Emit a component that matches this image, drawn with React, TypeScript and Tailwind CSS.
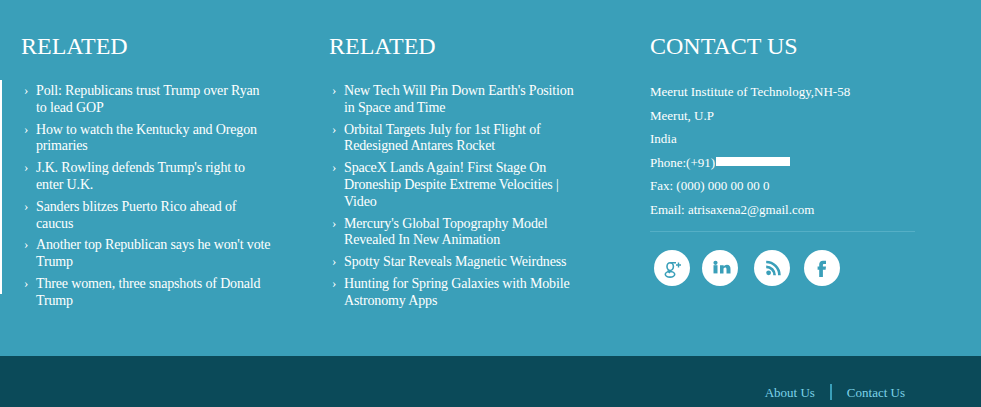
const col1 = [
  'Poll: Republicans trust Trump over Ryan to lead GOP',
  'How to watch the Kentucky and Oregon primaries',
  "J.K. Rowling defends Trump's right to enter U.K.",
  'Sanders blitzes Puerto Rico ahead of caucus',
  "Another top Republican says he won't vote Trump",
  'Three women, three snapshots of Donald Trump',
];

const col2 = [
  "New Tech Will Pin Down Earth's Position in Space and Time",
  'Orbital Targets July for 1st Flight of Redesigned Antares Rocket',
  'SpaceX Lands Again! First Stage On Droneship Despite Extreme Velocities | Video',
  "Mercury's Global Topography Model Revealed In New Animation",
  'Spotty Star Reveals Magnetic Weirdness',
  'Hunting for Spring Galaxies with Mobile Astronomy Apps',
];

function Links({ items }: { items: string[] }) {
  return (
    <ul className="flex flex-col gap-[5px]">
      {items.map((item) => (
        <li key={item} className="relative pl-[15px] text-[14px] leading-[16.8px] tracking-[-0.15px] text-white">
          <span className="absolute left-[3px] top-[-1px] text-[13px]">›</span>
          {item}
        </li>
      ))}
    </ul>
  );
}

function Social({ children }: { children: React.ReactNode }) {
  return (
    <a className="block h-9 w-9 rounded-full bg-white text-[#3a9fb9]">
      <svg viewBox="0 0 36 36" className="h-9 w-9">
        {children}
      </svg>
    </a>
  );
}

export default function App() {
  return (
    <div className="h-[407px] w-[981px] overflow-hidden bg-[#3a9fb9] font-['Liberation_Serif',serif]">
      <div className="flex h-[356px] pt-[33px]">
        {/* Related 1 */}
        <div className="w-[329px]">
          <h3 className="pl-[21px] text-[24px] leading-[26px] text-white">RELATED</h3>
          <div className="mt-[21px] h-[214px] w-[272px] border-l-2 border-white pl-[19px] pt-[3px]">
            <Links items={col1} />
          </div>
        </div>
        {/* Related 2 */}
        <div className="w-[321px]">
          <h3 className="text-[24px] leading-[26px] text-white">RELATED</h3>
          <div className="mt-[21px] w-[247px] pt-[3px]">
            <Links items={col2} />
          </div>
        </div>
        {/* Contact */}
        <div className="w-[265px]">
          <h3 className="text-[24px] leading-[26px] text-white">CONTACT US</h3>
          <div className="mt-[21px] text-[13px] leading-[23.6px] text-white">
            <p>Meerut Institute of Technology,NH-58</p>
            <p>Meerut, U.P</p>
            <p>India</p>
            <p className="flex items-center">
              Phone:(+91)
              <span className="ml-[1px] mt-[-2px] h-[9px] w-[74px] bg-white" />
            </p>
            <p>Fax: (000) 000 00 00 0</p>
            <p>Email: atrisaxena2@gmail.com</p>
          </div>
          <div className="mt-[9px] border-t border-[#55afc6]" />
          <div className="mt-[18px] flex pl-1">
            <Social>
              <g fill="none" stroke="currentColor" strokeWidth="1.6">
                <ellipse cx="16.2" cy="16.6" rx="3.2" ry="3.9" />
                <ellipse cx="16" cy="24.3" rx="4.7" ry="2.8" />
                <path d="M16.2 12.7H22M14.6 20.2c-1 1 -.6 1.4 1.6 2.6" />
                <path d="M24.5 12.5v5M22 15h5" strokeWidth="1.4" />
              </g>
            </Social>
            <div className="ml-3">
              <Social>
                <g fill="currentColor">
                  <circle cx="13.5" cy="12.8" r="2.1" />
                  <rect x="11.5" y="15.2" width="4" height="8.2" />
                  <path d="M18 15.2h3.7v1.3c.7-1 1.8-1.7 3.2-1.7 2.6 0 3.6 1.7 3.6 4.2v4.4h-4v-4c0-1.2-.4-1.8-1.4-1.8s-1.6.7-1.6 1.8v4h-3.5z" />
                </g>
              </Social>
            </div>
            <div className="ml-4">
              <Social>
                <circle cx="14.6" cy="22.8" r="2.4" fill="currentColor" />
                <g fill="none" stroke="currentColor" strokeWidth="2.7">
                  <path d="M12.2 16.8a8.4 8.4 0 0 1 8.4 8.4" />
                  <path d="M12.2 12a13.2 13.2 0 0 1 13.2 13.2" />
                </g>
              </Social>
            </div>
            <div className="ml-[14px]">
              <Social>
                <path
                  fill="currentColor"
                  d="M15.2 27V19.8H13.6V16.5H15.2V14.6C15.2 12 16.6 10.7 19 10.7H22V14H20.2C19.2 14 18.9 14.5 18.9 15.3V16.5H22L21.6 19.8H18.9V27Z"
                />
              </Social>
            </div>
          </div>
        </div>
      </div>
      <div className="flex h-[51px] items-start justify-end bg-[#0b4a59] pr-[76px] pt-[28px] text-[13px] leading-[17px] text-[#7dd3ea]">
        <a>About Us</a>
        <span className="mx-[15px] h-[16px] w-[2px] bg-[#3a9fb9]" />
        <a>Contact Us</a>
      </div>
    </div>
  );
}
